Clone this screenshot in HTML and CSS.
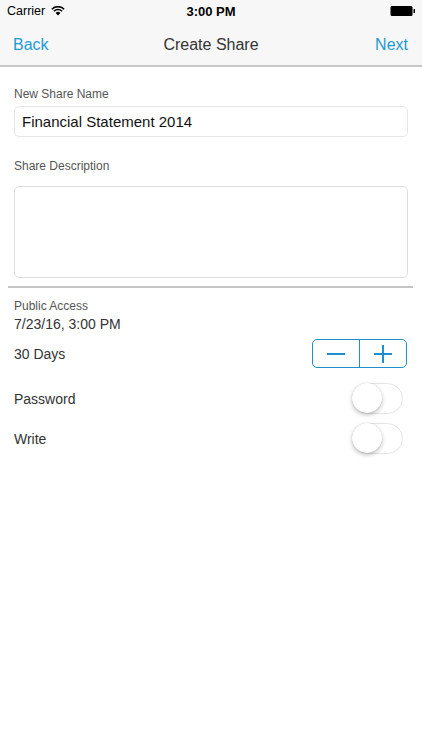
FILE: index.html
```html
<!DOCTYPE html>
<html>
<head>
<meta charset="utf-8">
<link rel="stylesheet" href="styles.css">
</head>
<body>
<div class="screen">
  <header class="top">
    <div class="status">
      <div class="status-left">
        <span class="carrier">Carrier</span>
        <svg class="wifi" width="14" height="10" viewBox="0 0 14 10">
          <path d="M7 9.6 L4.6 7 A3.4 3.4 0 0 1 9.4 7 Z" fill="#000"/>
          <path d="M2.9 5.3 A5.8 5.8 0 0 1 11.1 5.3" stroke="#000" stroke-width="1.5" fill="none"/>
          <path d="M0.9 3.2 A8.6 8.6 0 0 1 13.1 3.2" stroke="#000" stroke-width="1.5" fill="none"/>
        </svg>
      </div>
      <span class="time">3:00 PM</span>
      <div class="status-right">
        <svg width="26" height="12" viewBox="0 0 26 12">
          <rect x="0.5" y="1" width="22" height="10" rx="1.5" fill="#000"/>
          <rect x="23.5" y="4" width="1.5" height="4" fill="#000"/>
        </svg>
      </div>
    </div>
    <nav class="navbar">
      <span class="nav-btn">Back</span>
      <span class="nav-title">Create Share</span>
      <span class="nav-btn">Next</span>
    </nav>
  </header>

  <main class="content">
    <section class="fields">
      <label class="label">New Share Name</label>
      <div class="input">Financial Statement 2014</div>
      <label class="label label-desc">Share Description</label>
      <div class="textarea"></div>
    </section>
    <div class="divider"></div>
    <section class="access">
      <div class="label">Public Access</div>
      <div class="date">7/23/16, 3:00 PM</div>
      <div class="row row-days">
        <span class="row-text">30 Days</span>
        <div class="stepper">
          <span class="step"><span class="minus"></span></span>
          <span class="step step-plus"><span class="minus"></span><span class="vbar"></span></span>
        </div>
      </div>
      <div class="row row-toggle">
        <span class="row-text">Password</span>
        <span class="toggle"><span class="knob"></span></span>
      </div>
      <div class="row row-toggle">
        <span class="row-text">Write</span>
        <span class="toggle"><span class="knob"></span></span>
      </div>
    </section>
  </main>
</div>
</body>
</html>
```

FILE: styles.css
```css
* { box-sizing: border-box; }
html, body { margin: 0; padding: 0; background: #fff; }
body {
  font-family: "Liberation Sans", Arial, sans-serif;
  color: #333;
  width: 422px;
  height: 750px;
  overflow: hidden;
}
.top {
  background: #f7f7f7;
  border-bottom: 2px solid #c8c8c8;
}
.status {
  height: 22px;
  display: flex;
  align-items: center;
  justify-content: space-between;
  padding: 0 6px 0 7px;
  position: relative;
}
.status-left { display: flex; align-items: center; gap: 6px; }
.carrier { font-size: 12.5px; color: #000; }
.wifi { margin-top: -1px; }
.time {
  position: absolute;
  left: 0; right: 0;
  text-align: center;
  font-size: 13px;
  font-weight: bold;
  color: #000;
}
.status-right { display: flex; align-items: center; }
.navbar {
  height: 43px;
  display: flex;
  align-items: center;
  justify-content: space-between;
  padding: 2px 14px 0 13px;
  position: relative;
}
.nav-btn { font-size: 16px; color: #1e9ad6; }
.nav-title {
  position: absolute;
  left: 0; right: 0;
  top: 2px; bottom: 0;
  display: flex;
  align-items: center;
  justify-content: center;
  font-size: 16px;
  color: #333;
  pointer-events: none;
}
.fields { padding: 20px 14px 0 14px; display: flex; flex-direction: column; }
.label { font-size: 12px; color: #555; display: block; line-height: 15px; }
.input {
  margin-top: 4px;
  height: 31px;
  border: 1px solid #e6e6e6;
  border-radius: 5px;
  font-size: 15px;
  color: #111;
  padding: 0 7px;
  display: flex;
  align-items: center;
}
.label-desc { margin-top: 22px; }
.textarea {
  margin-top: 12px;
  height: 92px;
  border: 1px solid #dedede;
  border-radius: 5px;
}
.divider {
  margin: 8px 9px 0 8px;
  height: 2px;
  background: #c4c4c4;
}
.access { padding: 11px 14px 0 14px; }
.date { font-size: 14px; color: #333; line-height: 17px; margin-top: 2px; }
.row { display: flex; align-items: center; justify-content: space-between; }
.row-text { font-size: 14px; color: #333; }
.row-days { margin-top: 6px; height: 29px; }
.stepper {
  width: 95px;
  height: 29px;
  border: 1px solid #1e8fcf;
  border-radius: 5px;
  display: flex;
  margin-right: 1px;
}
.step {
  flex: 1;
  position: relative;
  display: flex;
  align-items: center;
  justify-content: center;
}
.step-plus { border-left: 1px solid #1e8fcf; }
.minus { width: 18px; height: 2px; background: #1e8fcf; }
.vbar {
  position: absolute;
  left: 50%;
  top: 50%;
  width: 2px;
  height: 18px;
  margin-left: -1px;
  margin-top: -9px;
  background: #1e8fcf;
}
.row-toggle { height: 31px; }
.row-days + .row-toggle { margin-top: 15px; }
.row-toggle + .row-toggle { margin-top: 9px; }
.toggle {
  width: 51px;
  height: 31px;
  border-radius: 16px;
  border: 1.5px solid #e4e4e4;
  background: #fff;
  position: relative;
  margin-right: 5px;
}
.knob {
  position: absolute;
  left: -1px;
  top: -1px;
  width: 30px;
  height: 30px;
  border-radius: 50%;
  background: #fff;
  box-shadow: 0 2px 4px rgba(0,0,0,0.25), 0 0 1px rgba(0,0,0,0.2);
}
```
